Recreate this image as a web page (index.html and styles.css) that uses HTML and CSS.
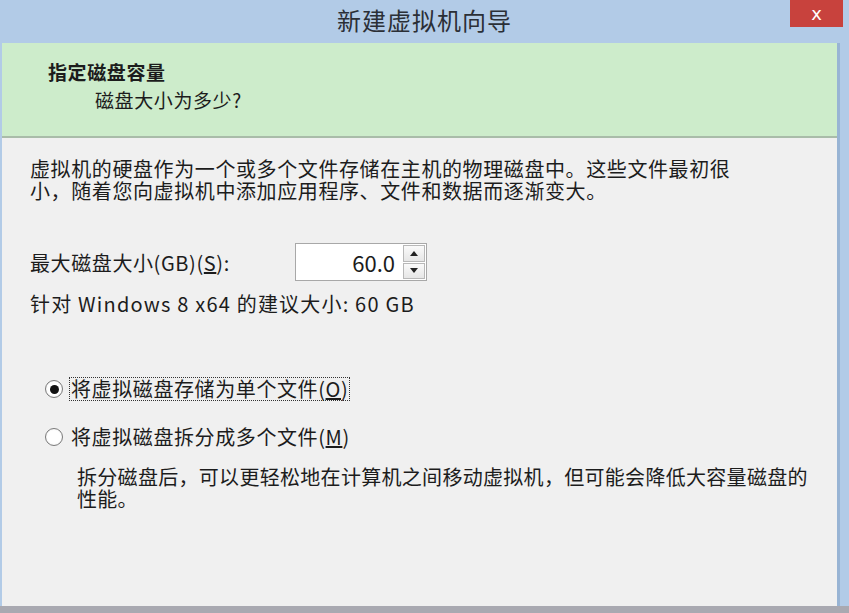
FILE: index.html
```html
<!DOCTYPE html>
<html lang="zh-CN">
<head>
  <meta charset="UTF-8" />
  <title>新建虚拟机向导</title>
  <link rel="stylesheet" href="styles.css">
</head>
<body>
  <div class="window">
    <div class="titlebar">
      <span class="title">新建虚拟机向导</span>
      <span class="close">x</span>
    </div>

    <div class="client">
      <div class="banner">
        <div class="banner-title">指定磁盘容量</div>
        <div class="banner-sub">磁盘大小为多少?</div>
      </div>

      <div class="content">
        <p class="intro">虚拟机的硬盘作为一个或多个文件存储在主机的物理磁盘中。这些文件最初很<br>小，随着您向虚拟机中添加应用程序、文件和数据而逐渐变大。</p>

        <div class="size-row">
          <label class="size-label">最大磁盘大小(GB)(<u>S</u>):</label>
          <div class="spin">
            <div class="spin-value">60.0</div>
            <div class="spin-buttons">
              <span class="spin-btn"><span class="arrow-up"></span></span>
              <span class="spin-btn"><span class="arrow-down"></span></span>
            </div>
          </div>
        </div>

        <p class="hint">针对 Windows 8 x64 的建议大小: 60 GB</p>

        <div class="radio-row first">
          <span class="radio checked"></span>
          <span class="radio-text focus">将虚拟磁盘存储为单个文件(<u>O</u>)</span>
        </div>
        <div class="radio-row">
          <span class="radio"></span>
          <span class="radio-text">将虚拟磁盘拆分成多个文件(<u>M</u>)</span>
        </div>
        <p class="split-note">拆分磁盘后，可以更轻松地在计算机之间移动虚拟机，但可能会降低大容量磁盘的<br>性能。</p>
      </div>
    </div>
  </div>
</body>
</html>
```

FILE: styles.css
```css
:root {
  --frame: #b2cbe7;
  --banner: #cdeccb;
  --face: #f0f0f0;
  --text: #1c1c1c;
}

body {
  margin: 0;
  font-family: "Noto Sans CJK SC", "Noto Sans", sans-serif;
  color: var(--text);
  background: #c8c8cc;
}

.window {
  width: 849px;
  height: 613px;
  display: flex;
  flex-direction: column;
  background: var(--frame);
  box-sizing: border-box;
  border-bottom: 7px solid #a9a9b1;
}

.titlebar {
  height: 43px;
  position: relative;
  display: flex;
  justify-content: center;
  align-items: center;
}

.title {
  font-size: 24px;
  color: #2b2f36;
  letter-spacing: 1px;
  margin-top: -4px;
}

.close {
  position: absolute;
  top: 0;
  left: 790px;
  width: 53px;
  height: 27px;
  background: #c8423d;
  color: #fff;
  font-family: "DejaVu Sans", sans-serif;
  font-size: 18px;
  display: flex;
  justify-content: center;
  align-items: center;
  line-height: 1;
}

.client {
  flex: 1;
  margin: 0 9px 0 2px;
  background: var(--face);
  border-right: 3px solid #98b4d4;
  display: flex;
  flex-direction: column;
}

.banner {
  height: 95px;
  box-sizing: border-box;
  background: var(--banner);
  border-bottom: 2px solid #a9bca9;
  padding: 17px 0 0 46px;
}

.banner-title {
  font-size: 19px;
  font-weight: bold;
  line-height: 24px;
  letter-spacing: 0.6px;
}

.banner-sub {
  font-size: 19px;
  line-height: 24px;
  margin: 4px 0 0 47px;
  letter-spacing: 0.6px;
}

.content {
  padding: 20px 0 0 28px;
  font-size: 20px;
  letter-spacing: 0.6px;
}

.intro {
  margin: 0;
  line-height: 22px;
}

.size-row {
  display: flex;
  align-items: center;
  margin-top: 41px;
}

.size-label {
  width: 265px;
}

.spin {
  width: 132px;
  height: 38px;
  box-sizing: border-box;
  border: 1px solid #a8a8a8;
  background: #fff;
  display: flex;
  letter-spacing: 0;
}

.spin-value {
  flex: 1;
  text-align: right;
  font-size: 22px;
  line-height: 36px;
  padding-right: 8px;
}

.spin-buttons {
  width: 22px;
  display: flex;
  flex-direction: column;
  gap: 1px;
  padding: 1px 1px 1px 0;
}

.spin-btn {
  flex: 1;
  border: 1px solid #b8b8b8;
  background: linear-gradient(#fafafa, #e6e6e6);
  display: flex;
  justify-content: center;
  align-items: center;
}

.arrow-up {
  border: 4px solid transparent;
  border-bottom: 5px solid #222;
  border-top: 0;
}

.arrow-down {
  border: 4px solid transparent;
  border-top: 5px solid #222;
  border-bottom: 0;
}

.hint {
  margin: 12px 0 0;
  line-height: 22px;
  letter-spacing: 1.2px;
}

.radio-row {
  display: flex;
  align-items: center;
  height: 24px;
  margin: 24px 0 0 15px;
}

.radio-row.first {
  margin-top: 62px;
}

.radio {
  width: 18px;
  height: 18px;
  box-sizing: border-box;
  border-radius: 50%;
  border: 1px solid #7a7a7a;
  background: radial-gradient(circle, #ffffff 55%, #e2e2e2 100%);
  display: flex;
  justify-content: center;
  align-items: center;
  margin-right: 6px;
}

.radio.checked::after {
  content: "";
  width: 9px;
  height: 9px;
  border-radius: 50%;
  background: #111;
}

.radio-text {
  line-height: 22px;
  padding: 0 1px;
  border: 1px dotted transparent;
}

.radio-text.focus {
  border-color: #333;
}

.split-note {
  margin: 17px 0 0 47px;
  line-height: 22px;
  letter-spacing: 0.3px;
}
```
